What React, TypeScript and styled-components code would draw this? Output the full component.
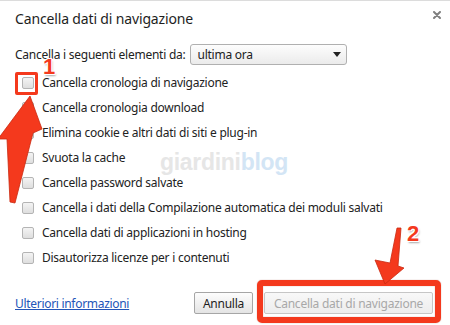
import React from 'react';
import styled, { createGlobalStyle } from 'styled-components';

const Global = createGlobalStyle`
  html, body { margin: 0; padding: 0; background: #fff; }
  body { font-family: "Noto Sans", "DejaVu Sans", sans-serif; color: #222; }
  * { box-sizing: border-box; }
`;

const RED = '#f4391d';

const Page = styled.div`
  position: relative;
  width: 450px;
  height: 325px;
  overflow: hidden;
  background: #fff;
  border-top: 1px solid #dcdcdc;
`;

const Dialog = styled.section`
  display: flex;
  flex-direction: column;
  padding: 0 9px 0 15px;
`;

const Header = styled.header`
  display: flex;
  justify-content: space-between;
  align-items: flex-start;
  height: 43px;
  padding-top: 9px;
`;

const Title = styled.h1`
  margin: 0;
  font-size: 14px;
  line-height: 18px;
  font-weight: 400;
  letter-spacing: -0.15px;
  color: #1e1e1e;
`;

const CloseButton = styled.button`
  display: flex;
  border: 0;
  padding: 0;
  margin-top: 1px;
  background: none;
  width: 8px;
  height: 8px;
`;

const SelectRow = styled.div`
  display: flex;
  align-items: center;
  gap: 5px;
  height: 21px;
`;

const Text = styled.span`
  font-size: 12px;
  letter-spacing: -0.25px;
  color: #222;
  white-space: nowrap;
`;

const SelectBox = styled.div`
  display: flex;
  align-items: center;
  justify-content: space-between;
  width: 157px;
  height: 21px;
  padding: 0 5px 0 6px;
  border: 1px solid #b0b0b0;
  border-radius: 3px;
  background: linear-gradient(#fdfdfd, #ebebeb);
`;

const Caret = styled.span`
  width: 0;
  height: 0;
  border-left: 4px solid transparent;
  border-right: 4px solid transparent;
  border-top: 5px solid #222;
`;

const CheckList = styled.ul`
  list-style: none;
  margin: 5px 0 0;
  padding: 0;
`;

const Row = styled.li`
  display: flex;
  align-items: center;
  gap: 8px;
  height: 25px;
  padding-left: 7px;
`;

const BoxWrap = styled.span`
  position: relative;
  display: flex;
`;

const Checkbox = styled.span`
  display: block;
  width: 12px;
  height: 12px;
  border: 1px solid #b4b4b4;
  border-radius: 2px;
  background: linear-gradient(#f4f4f4, #dedede);
`;

const CheckRing = styled.span`
  position: absolute;
  left: -7px;
  right: -4px;
  top: -5px;
  bottom: -6px;
  border: 3px solid ${RED};
  border-radius: 2px;
`;

const Footer = styled.footer`
  display: flex;
  align-items: center;
  gap: 11px;
  height: 22px;
  margin: 22px 8px 0 0;
`;

const MoreLink = styled.a`
  flex: 1;
  font-size: 12px;
  letter-spacing: -0.3px;
  color: #2355b8;
  text-decoration: underline;
`;

const Button = styled.button<{ $disabled?: boolean; $w: number }>`
  width: ${(p) => p.$w}px;
  height: 22px;
  padding: 0;
  font-family: inherit;
  font-size: 12px;
  letter-spacing: -0.25px;
  border-radius: 2px;
  border: 1px solid ${(p) => (p.$disabled ? '#c6c6c6' : '#a6a6a6')};
  color: ${(p) => (p.$disabled ? '#a8a8a8' : '#1e1e1e')};
  background: ${(p) =>
    p.$disabled ? 'linear-gradient(#f8f8f8, #ededed)' : 'linear-gradient(#fdfdfd, #e4e4e4)'};
`;

const HighlightWrap = styled.span`
  position: relative;
  display: flex;
`;

const ButtonRing = styled.span`
  position: absolute;
  left: -7px;
  right: -8px;
  top: -12px;
  bottom: -9px;
  border: 6px solid ${RED};
  border-radius: 5px;
  box-shadow: 0 0 1px rgba(120, 20, 0, 0.6), inset 0 0 1px rgba(120, 20, 0, 0.6);
`;

const Watermark = styled.div`
  position: absolute;
  left: 160px;
  top: 148px;
  font-family: "Liberation Sans", Arial, sans-serif;
  font-weight: 700;
  font-size: 23px;
  letter-spacing: -0.3px;
  color: #e6e6e6;
  text-shadow: 0 0 1px #fff;
  pointer-events: none;
`;

const Blue = styled.span`
  color: #d3e5f5;
`;

const Annotations = styled.svg`
  position: absolute;
  left: 0;
  top: 0;
  pointer-events: none;
`;

const Marker = styled.span<{ $x: number; $y: number }>`
  position: absolute;
  left: ${(p) => p.$x}px;
  top: ${(p) => p.$y}px;
  font-family: "Liberation Sans", Arial, sans-serif;
  font-weight: 700;
  font-size: 22px;
  line-height: 22px;
  color: ${RED};
  text-shadow: 1px 1px 0 #fff, -1px -1px 0 #fff, 1px -1px 0 #fff, -1px 1px 0 #fff,
    1px 2px 2px rgba(0, 0, 0, 0.35);
`;

const items = [
  'Cancella cronologia di navigazione',
  'Cancella cronologia download',
  'Elimina cookie e altri dati di siti e plug-in',
  'Svuota la cache',
  'Cancella password salvate',
  'Cancella i dati della Compilazione automatica dei moduli salvati',
  'Cancella dati di applicazioni in hosting',
  'Disautorizza licenze per i contenuti',
];

export default function App() {
  return (
    <>
      <Global />
      <Page>
        <Dialog>
          <Header>
            <Title>Cancella dati di navigazione</Title>
            <CloseButton aria-label="Chiudi">
              <svg width="8" height="8" viewBox="0 0 8 8">
                <path d="M1 1 L7 7 M7 1 L1 7" stroke="#808080" strokeWidth="2" strokeLinecap="round" />
              </svg>
            </CloseButton>
          </Header>
          <SelectRow>
            <Text>Cancella i seguenti elementi da:</Text>
            <SelectBox>
              <Text>ultima ora</Text>
              <Caret />
            </SelectBox>
          </SelectRow>
          <CheckList>
            {items.map((label, i) => (
              <Row key={label}>
                <BoxWrap>
                  <Checkbox />
                  {i === 0 && <CheckRing />}
                </BoxWrap>
                <Text>{label}</Text>
              </Row>
            ))}
          </CheckList>
          <Footer>
            <MoreLink href="#">Ulteriori informazioni</MoreLink>
            <Button $w={59}>Annulla</Button>
            <HighlightWrap>
              <Button $w={169} $disabled disabled>
                Cancella dati di navigazione
              </Button>
              <ButtonRing />
            </HighlightWrap>
          </Footer>
        </Dialog>
        <Watermark>
          giardini<Blue>blog</Blue>
        </Watermark>
        <Annotations width="450" height="325" viewBox="0 0 450 325">
          <polygon
            points="30,95 42,128 33,132 15,202 10,201 7,138 -2,138"
            fill={RED}
            stroke="#c92a10"
            strokeWidth="0.8"
            strokeLinejoin="round"
          />
          <polygon
            points="385,283 375,259 390,262 397,227 401,227 398,265 404,267"
            fill={RED}
            stroke="#c92a10"
            strokeWidth="0.8"
            strokeLinejoin="round"
          />
        </Annotations>
        <Marker $x={43} $y={55}>1</Marker>
        <Marker $x={407} $y={222}>2</Marker>
      </Page>
    </>
  );
}
